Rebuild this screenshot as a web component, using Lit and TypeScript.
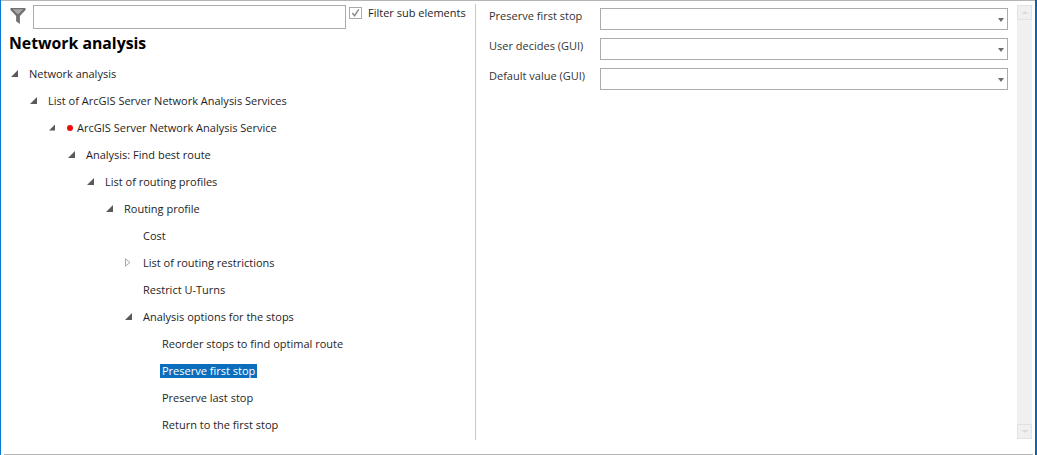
import { LitElement, html, css } from "lit";
import { customElement } from "lit/decorators.js";

type Node = { t: string; l: number; a?: "open" | "closed"; dot?: boolean; sel?: boolean };
const nodes: Node[] = [
  { t: "Network analysis", l: 0, a: "open" },
  { t: "List of ArcGIS Server Network Analysis Services", l: 1, a: "open" },
  { t: "ArcGIS Server Network Analysis Service", l: 2, a: "open", dot: true },
  { t: "Analysis: Find best route", l: 3, a: "open" },
  { t: "List of routing profiles", l: 4, a: "open" },
  { t: "Routing profile", l: 5, a: "open" },
  { t: "Cost", l: 6 },
  { t: "List of routing restrictions", l: 6, a: "closed" },
  { t: "Restrict U-Turns", l: 6 },
  { t: "Analysis options for the stops", l: 6, a: "open" },
  { t: "Reorder stops to find optimal route", l: 7 },
  { t: "Preserve first stop", l: 7, sel: true },
  { t: "Preserve last stop", l: 7 },
  { t: "Return to the first stop", l: 7 },
];
const fields = ["Preserve first stop", "User decides (GUI)", "Default value (GUI)"];

@customElement("app-root")
export class AppRoot extends LitElement {
  static styles = css`
    :host { display: block; width: 1037px; height: 455px; overflow: hidden; background: #fff;
      font-family: "Open Sans", "Noto Sans", sans-serif; font-size: 11px; color: #1e1e1e; }
    * { box-sizing: border-box; }
    .frame { width: 1037px; height: 455px; display: flex; flex-direction: column;
      border-left: 1px solid #0a78d2; border-right: 2px solid #0f65a8; }
    .topline { height: 1px; background: #b4b4b4; flex: none; }
    .main { height: 439px; display: flex; flex: none; padding-top: 3px; }
    .left { width: 475px; flex: none; border-right: 1px solid #c8c8c8; height: 436px; }
    .filter { display: flex; height: 26px; padding-top: 1px; }
    .funnel { width: 32px; flex: none; padding: 3px 0 0 9px; }
    .search { width: 313px; height: 24px; flex: none; border: 1px solid #ababab; background: #fff; }
    .check { display: flex; margin-left: 3px; gap: 6px; height: 14px; }
    .box { width: 13px; height: 12px; border: 1px solid #ababab; margin-top: 2px; display: flex; }
    .heading { font-size: 15.8px; font-weight: 700; color: #000; padding-left: 8px; height: 22px;
      line-height: 22px; margin-top: 2px; }
    .tree { margin-top: 6px; }
    .row { height: 27px; display: flex; align-items: center; white-space: nowrap; }
    .arrow { width: 27px; flex: none; display: flex; align-items: center; padding-left: 10px; }
    .dot { width: 6px; height: 6px; border-radius: 50%; background: #f00d0d; margin-right: 3px; margin-left: 12px; }
    .withdot .arrow { width: 16px; }
    .label { padding: 0 2px; height: 14px; line-height: 14px; margin-left: -1px; }
    .sel { background: #0a6ebd; color: #fff; }
    .right { flex: 1; display: flex; min-width: 0; }
    .form { width: 532px; flex: none; padding: 4px 0 0 13px; display: grid;
      grid-template-columns: 111px 408px; grid-auto-rows: 22px; row-gap: 8px; align-content: start; }
    .flabel { line-height: 16px; color: #333; }
    .select { border: 1px solid #ababab; display: flex; justify-content: flex-end; align-items: center; padding: 2px 3px 0 0; }
    .caret { width: 0; height: 0; border: 3px solid transparent; border-top: 4px solid #6e6e6e; border-bottom: 0; }
    .scroll { width: 15px; height: 434px; background: #f0f0f0; margin: 1px 0 0 9px; flex: none;
      display: flex; flex-direction: column; justify-content: space-between; }
    .sb { height: 15px; border: 1px solid #e2e2e2; display: flex; align-items: center; justify-content: center; }
    .up { width: 0; height: 0; border: 4px solid transparent; border-bottom: 3px solid #dcdcdc; border-top: 0; }
    .down { width: 0; height: 0; border: 4px solid transparent; border-top: 3px solid #dcdcdc; border-bottom: 0; }
    .bottom { flex: none; margin: 13.5px 2px 0 3px; height: 1.5px; background: #b4b4b4; }
  `;

  private arrow(a?: string) {
    if (a === "open")
      return html`<svg width="7" height="7" viewBox="0 0 7 7"><path d="M0 7 7 7 7 0Z" fill="#5a5a5a"/></svg>`;
    if (a === "closed")
      return html`<svg width="6" height="9" viewBox="0 0 6 9"><path d="M.5.8 5 4.5.5 8.2Z" fill="#fff" stroke="#a6a6a6"/></svg>`;
    return html``;
  }

  render() {
    return html`<div class="frame">
      <div class="topline"></div>
      <div class="main">
        <div class="left">
          <div class="filter">
            <div class="funnel">
              <svg width="16" height="16" viewBox="0 0 16 17"><path d="M0 0H16V2L10 8.5V17L6 14V8.5L0 2Z" fill="#707070"/><path d="M2.5 1.2H13.5L9 6H7Z" fill="#a8a8a8"/></svg>
            </div>
            <div class="search"></div>
            <div class="check">
              <div class="box"><svg width="11" height="10" viewBox="0 0 11 11"><path d="M2 5.5 4.5 8.5 9 1.5" fill="none" stroke="#8a8a8a" stroke-width="1.6"/></svg></div>
              <span>Filter sub elements</span>
            </div>
          </div>
          <div class="heading">Network analysis</div>
          <div class="tree">
            ${nodes.map(
              (n) => html`<div class="row ${n.dot ? "withdot" : ""}" style="padding-left:${n.l * 19}px">
                <div class="arrow">${this.arrow(n.a)}</div>
                ${n.dot ? html`<span class="dot"></span>` : ""}
                <span class="label ${n.sel ? "sel" : ""}">${n.t}</span>
              </div>`
            )}
          </div>
        </div>
        <div class="right">
          <div class="form">
            ${fields.map(
              (f) => html`<div class="flabel">${f}</div><div class="select"><span class="caret"></span></div>`
            )}
          </div>
          <div class="scroll">
            <div class="sb"><span class="up"></span></div>
            <div class="sb"><span class="down"></span></div>
          </div>
        </div>
      </div>
      <div class="bottom"></div>
    </div>`;
  }
}
